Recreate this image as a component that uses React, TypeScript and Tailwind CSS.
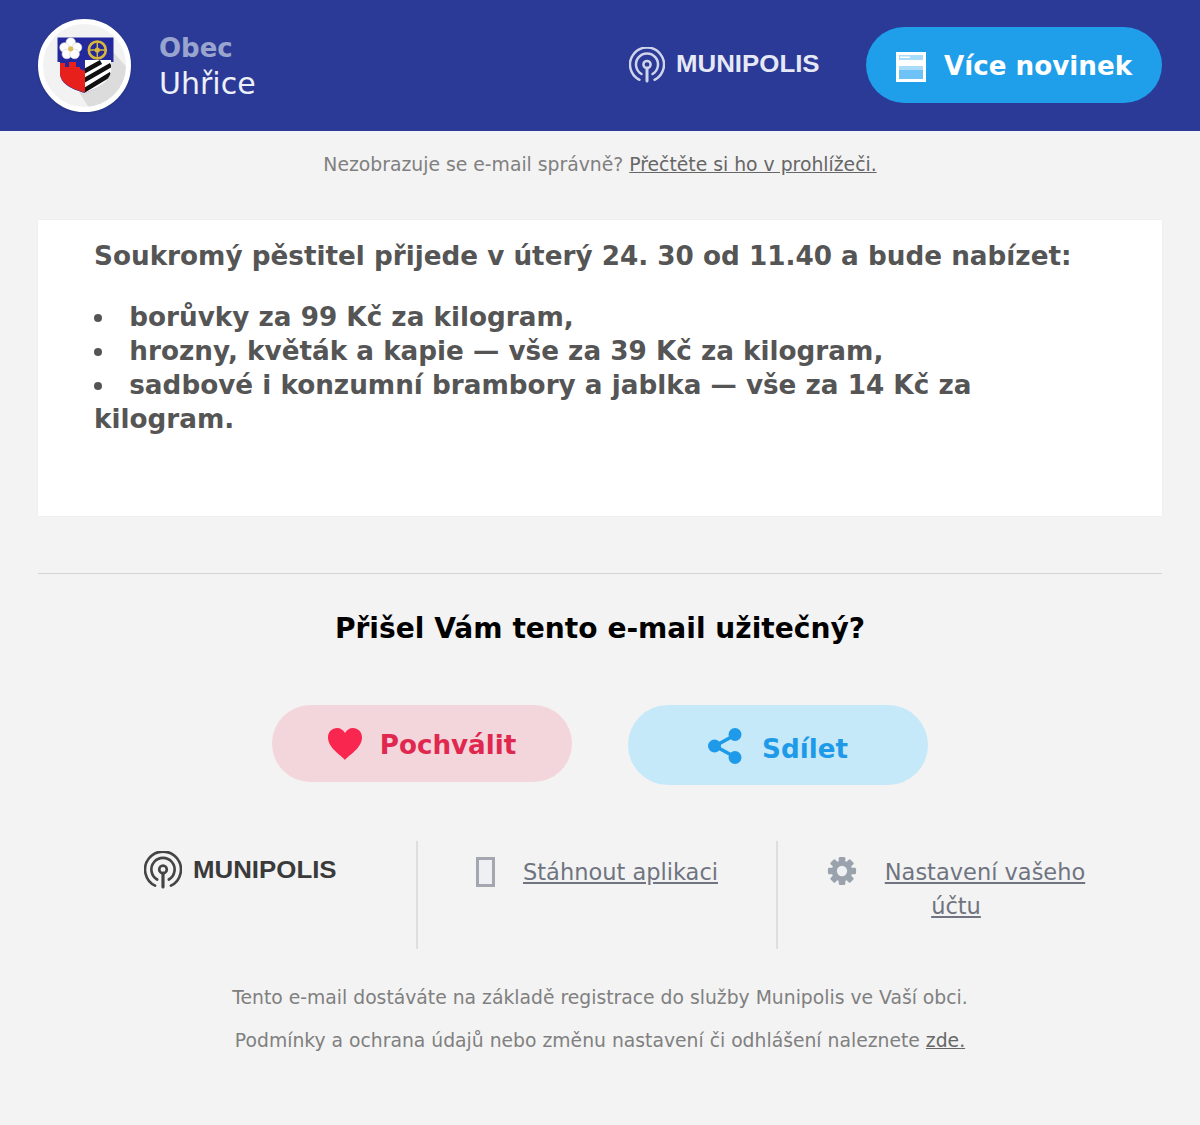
function BroadcastIcon({ className }: { className: string }) {
  return (
    <svg viewBox="0 0 36 36" fill="none" stroke="currentColor" strokeWidth="2.5" strokeLinecap="round" className={className}>
      <path d="M10.5 32.8a17 17 0 1 1 15 0" />
      <path d="M12.5 27a11 11 0 1 1 11 0" />
      <circle cx="18" cy="17.5" r="3.6" />
      <path d="M18 21v13" strokeWidth="3" />
    </svg>
  )
}

function Logo({ className, iconClass, iconColor }: { className: string; iconClass: string; iconColor: string }) {
  return (
    <div className="flex items-center gap-[11px]">
      <span className={iconColor}>
        <BroadcastIcon className={iconClass} />
      </span>
      <span className={`font-['Liberation_Sans',sans-serif] font-bold text-[23.5px] leading-none scale-x-[1.1] origin-left w-[144px] ${className}`}>
        MUNIPOLIS
      </span>
    </div>
  )
}

function Crest() {
  return (
    <div className="w-[93px] h-[93px] rounded-full bg-[#f2f2f2] border-[5px] border-white overflow-hidden shadow-sm shrink-0">
      <svg viewBox="0 0 83 83" className="w-full h-full">
        <defs>
          <clipPath id="crest-right">
            <path d="M42 36H68V48C66 58 53 65 42 69Z" />
          </clipPath>
        </defs>
        <path d="M70 28 L90 50 L90 90 L50 90 L36 68 Z" fill="#dcdcdc" />
        <path d="M14.500 13.500H70.500V38H67V48C65 58 53 65 42 69C31 66 18 61 17 50V38H14.500Z" fill="#23289c" />
        <path d="M17 39H22V43H26V38H33V43H37V45L42 47V68.500C31 65.500 18 60 17 50Z" fill="#e8201c" />
        <g clipPath="url(#crest-right)">
          <path d="M42 36H68V70H42Z" fill="#fff" />
          <path d="M40 48L58 38M40 57L68 41M40 67L68 50" stroke="#111" strokeWidth="4.500" />
        </g>
        <g fill="#fff" stroke="#cfd6d0" strokeWidth="0.6">
          <circle cx="27.700" cy="18.500" r="4.800" />
          <circle cx="21.500" cy="23.500" r="4.800" />
          <circle cx="34" cy="23.500" r="4.800" />
          <circle cx="23.800" cy="30" r="4.800" />
          <circle cx="31.600" cy="30" r="4.800" />
        </g>
        <circle cx="27.700" cy="24.800" r="2.600" fill="#dcbf5a" />
        <circle cx="54.300" cy="26" r="8.500" fill="none" stroke="#d8b83a" strokeWidth="2.600" />
        <circle cx="54.300" cy="26" r="2.600" fill="#d8b83a" />
        <path d="M54.300 18V34M46.300 26H62.300" stroke="#d8b83a" strokeWidth="1.400" />
      </svg>
    </div>
  )
}

function NewsIcon() {
  return (
    <svg viewBox="0 0 30 30" className="w-[30px] h-[30px]">
      <path d="M0 0H30V30H0Z" fill="#fff" />
      <path d="M3 3H27V8H3Z" fill="#a9dcfb" />
      <path d="M4 4.500H14V6H4Z" fill="#fff" />
      <path d="M3 14H27V27H3Z" fill="#a9dcfb" />
      <path d="M3 18H27V27H3Z" fill="#6fc2f5" />
    </svg>
  )
}

function HeartIcon() {
  return (
    <svg viewBox="0 0 34 32" className="w-[34px] h-[32px]">
      <path d="M17 32C13 27 0 20 0 9.500C0 3.500 4.500 0 9 0C12.500 0 15.500 2 17 5C18.500 2 21.500 0 25 0C29.500 0 34 3.500 34 9.500C34 20 21 27 17 32Z" fill="#f9274f" />
    </svg>
  )
}

function ShareIcon() {
  return (
    <svg viewBox="0 0 34 36" className="w-[34px] h-[36px] mt-[2px]" fill="#1f9ae8" stroke="#1f9ae8">
      <path d="M27 7L7 18L27 29" fill="none" strokeWidth="3.600" />
      <circle cx="27" cy="6.500" r="6.500" stroke="none" />
      <circle cx="6.500" cy="18" r="6.500" stroke="none" />
      <circle cx="27" cy="29.500" r="6.500" stroke="none" />
    </svg>
  )
}

function GearIcon() {
  return (
    <svg viewBox="0 0 32 32" className="w-[30px] h-[30px]">
      <g fill="#9aa3ad">
        <circle cx="16" cy="16" r="11" />
        <rect x="12.500" y="1" width="7" height="30" rx="1.500" />
        <rect x="12.500" y="1" width="7" height="30" rx="1.500" transform="rotate(45 16 16)" />
        <rect x="12.500" y="1" width="7" height="30" rx="1.500" transform="rotate(90 16 16)" />
        <rect x="12.500" y="1" width="7" height="30" rx="1.500" transform="rotate(135 16 16)" />
      </g>
      <circle cx="16" cy="16" r="5.500" fill="#eef0f3" />
    </svg>
  )
}

export default function App() {
  return (
    <div className="min-h-[1125px] bg-[#f3f3f3] font-['DejaVu_Sans',sans-serif] text-[#555]">
      <header className="h-[131px] bg-[#2a3a96] px-[38px] flex items-center">
        <Crest />
        <div className="ml-[28px] mt-[2px]">
          <div className="text-[26px] leading-[34px] font-bold text-[#99a5cf]">Obec</div>
          <div className="text-[30px] leading-[38px] text-[#eef0f8]">Uhřice</div>
        </div>
        <div className="ml-auto mr-[46px] -mt-[2px]">
          <Logo className="text-[#e6e9f5]" iconClass="w-[36px] h-[36px]" iconColor="text-[#cfd4ea]" />
        </div>
        <a className="w-[296px] h-[76px] -mt-[2px] pt-[4px] rounded-full bg-[#1f9eea] flex items-center justify-center gap-[18px] text-white text-[26.2px] font-bold">
          <NewsIcon />
          Více novinek
        </a>
      </header>

      <p className="mt-[21px] text-center text-[18.8px] leading-[26px] text-[#808080]">
        Nezobrazuje se e-mail správně? <a className="underline text-[#666]">Přečtěte si ho v prohlížeči.</a>
      </p>

      <main className="mx-[38px] mt-[42px] h-[296px] bg-white pt-[19px] px-[56px] text-[26.25px] font-bold leading-[34px] text-[#555] shadow-[0_0_2px_rgba(0,0,0,0.06)]">
        <p>Soukromý pěstitel přijede v úterý 24. 30 od 11.40 a bude nabízet:</p>
        <ul className="mt-[27px] list-disc list-inside">
          <li>borůvky za 99 Kč za kilogram,</li>
          <li>hrozny, květák a kapie — vše za 39 Kč za kilogram,</li>
          <li>sadbové i konzumní brambory a jablka — vše za 14 Kč za kilogram.</li>
        </ul>
      </main>

      <div className="mx-[38px] mt-[57px] border-t border-[#d4d4d4]" />

      <h2 className="mt-[38px] text-center text-[28.1px] leading-[34px] font-bold text-black">Přišel Vám tento e-mail užitečný?</h2>

      <div className="mt-[59px] flex justify-center items-start gap-[56px]">
        <a className="w-[300px] h-[77px] rounded-full bg-[#f3d5dc] flex items-center justify-center gap-[18px] text-[#e0284f] text-[26.2px] font-bold">
          <HeartIcon />
          <span className="mt-[4px]">Pochválit</span>
        </a>
        <a className="w-[300px] h-[80px] rounded-full bg-[#c5e9f8] flex items-center justify-center gap-[20px] text-[#1f9ae8] text-[26.2px] font-bold">
          <ShareIcon />
          <span className="mt-[10px]">Sdílet</span>
        </a>
      </div>

      <div className="mt-[56px] mx-[56px] grid grid-cols-[360px_360px_358px] h-[108px] text-[22.5px] leading-[34px] text-[#6f7480]">
        <div className="pl-[88px] pt-[10px]">
          <Logo className="text-[#3a3a3a] mt-[2px]" iconClass="w-[38px] h-[38px]" iconColor="text-[#444]" />
        </div>
        <div className="border-l-2 border-[#dedede] pt-[14px] text-center">
          <span className="inline-block align-top mt-[2px] mr-[28px] w-[19px] h-[30px] bg-[#eef0f3] border-[3px] border-[#a3a8b0]" />
          <a className="underline">Stáhnout aplikaci</a>
        </div>
        <div className="border-l-2 border-[#dedede] pt-[14px] px-[40px] text-center">
          <span className="inline-block align-top mt-[1px] mr-[28px]"><GearIcon /></span>
          <a className="underline">Nastavení vašeho účtu</a>
        </div>
      </div>

      <div className="mt-[36px] text-center text-[18.77px] leading-[26px] text-[#808080]">
        <p>Tento e-mail dostáváte na základě registrace do služby Munipolis ve Vaší obci.</p>
        <p className="mt-[17px]">Podmínky a ochrana údajů nebo změnu nastavení či odhlášení naleznete <a className="underline text-[#666]">zde.</a></p>
      </div>
    </div>
  )
}
